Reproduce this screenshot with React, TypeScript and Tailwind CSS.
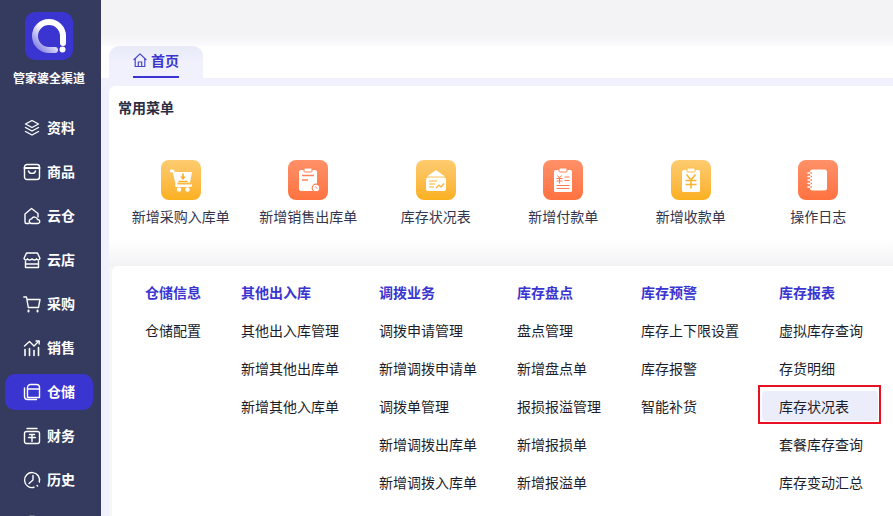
import type { ReactNode } from "react";

const FONT = "font-['Noto_Sans_CJK_SC','Noto_Sans',sans-serif]";

// --- sidebar icons ---
const navIcons: Record<string, ReactNode> = {
  layers: (
    <>
      <path d="M9 1.500 15.500 5 9 8.500 2.500 5Z" />
      <path d="M2.500 8.500 9 12l6.500-3.500" />
      <path d="M2.500 12.500 9 16l6.500-3.500" />
    </>
  ),
  goods: (
    <>
      <rect x="1.500" y="1.500" width="15" height="15" rx="2.500" />
      <path d="M1.500 5h15" strokeWidth="2" />
      <path d="M5.500 8c.8 3.200 6.200 3.200 7 0" />
    </>
  ),
  cloud: (
    <>
      <path d="M6 16.500H3.500A1.500 1.500 0 0 1 2 15V7l6.500-5.500L15 6.500V10" />
      <path d="M8.500 16.500a2.300 2.300 0 0 1 .1-4.600 3.200 3.200 0 0 1 6 .6 2 2 0 0 1 .2 4Z" />
    </>
  ),
  store: (
    <>
      <path d="M3.500 2h11L17 7.500c-.6 1.800-3 1.800-3.500.3-.7 1.500-3.800 1.500-4.500 0-.7 1.500-3.800 1.500-4.500 0C4 9.300 1.600 9.300 1 7.500Z" />
      <path d="M2.500 10v6.500h13V10" />
      <path d="M2.500 13h13" />
    </>
  ),
  cart: (
    <>
      <path d="M.8 2h2.700l1.800 10.500h10.200L17 4.500H4" />
      <path d="M5.500 15.500v1M14.500 15.500v1" strokeWidth="2" />
    </>
  ),
  chart: (
    <>
      <path d="M2 16.500v-6M6.500 16.500V9.500M11 16.500v-5M15.500 16.500V8.500" strokeWidth="1.600" />
      <path d="M1.500 7 6.500 2.500 11 7l4.500-4.500" />
      <path d="M13 2h3.200v3" />
    </>
  ),
  stock: (
    <>
      <path d="M1.500 5v8.500a3 3 0 0 0 3 3h9" />
      <path d="M4.500 14.500V4.500a3 3 0 0 1 3-3h6a3 3 0 0 1 3 3v10Z" />
      <path d="M4.500 6h12" />
    </>
  ),
  finance: (
    <>
      <path d="M4 1.500h10" />
      <rect x="1.500" y="4.500" width="15" height="12" rx="2" />
      <path d="M6.500 7.500h5M5.500 10.500h7M9 7.500v7" />
    </>
  ),
  history: (
    <>
      <path d="M16.300 11A7.500 7.500 0 1 0 11 16.300" />
      <path d="M10 4.500V9l-4 3.500" />
      <path d="M14 14.500l.6.600" />
    </>
  ),
  more: <rect x="5" y="1.500" width="8" height="15" rx="2" />,
};

function NavIcon({ name }: { name: string }) {
  return (
    <svg
      viewBox="0 0 18 18"
      className="h-[18px] w-[18px] shrink-0"
      fill="none"
      stroke="white"
      strokeWidth="1.400"
      strokeLinecap="round"
      strokeLinejoin="round"
    >
      {navIcons[name]}
    </svg>
  );
}

const navItems = [
  { label: "资料", icon: "layers" },
  { label: "商品", icon: "goods" },
  { label: "云仓", icon: "cloud" },
  { label: "云店", icon: "store" },
  { label: "采购", icon: "cart" },
  { label: "销售", icon: "chart" },
  { label: "仓储", icon: "stock", active: true },
  { label: "财务", icon: "finance" },
  { label: "历史", icon: "history" },
];

// --- quick menu icons, viewBox 40x40 ---
const quickIcons: Record<string, ReactNode> = {
  cart: (
    <>
      <path d="M9 11h3.500l3.500 15h13" fill="none" stroke="white" strokeWidth="2" strokeLinejoin="round" />
      <path d="M13.500 12H31l-2 10.500H15.500Z" fill="white" />
      <rect x="9" y="9.500" width="4" height="3" rx="1" fill="white" />
      <rect x="14" y="24.500" width="17" height="2" fill="white" />
      <circle cx="18" cy="29.500" r="2.200" fill="white" />
      <circle cx="26.500" cy="29.500" r="2.200" fill="white" />
      <path d="M21.200 13.500h1.600v3h2L22 20l-2.800-3.500h2Z" fill="#f8ad29" />
      <rect x="17.500" y="20.800" width="9" height="1.200" fill="#f8ad29" />
    </>
  ),
  sale: (
    <>
      <rect x="11" y="10" width="18" height="21" rx="2" fill="white" />
      <rect x="16" y="8" width="8" height="4" rx="1" fill="white" stroke="#ff8259" />
      <path d="M14 15.500h12M14 20h6" stroke="#ff8259" strokeWidth="1.300" />
      <circle cx="28" cy="28" r="3.800" fill="white" stroke="#ff7a4f" strokeWidth="1.200" />
      <path d="M27.500 26.500 29 28.500" stroke="#ff7a4f" />
    </>
  ),
  stock: (
    <>
      <path d="M11 16.500 20 10l9 6.500Z" fill="white" />
      <rect x="10" y="17.500" width="20" height="13.500" rx="2" fill="white" />
      <path d="M13 21h8M13 24h6M13 27h5" stroke="#fbb533" strokeWidth="1.100" />
      <path d="M20 28l3-3 2 2 3-3.500" stroke="#fbb533" strokeWidth="1.200" fill="none" />
    </>
  ),
  pay: (
    <>
      <rect x="11" y="10" width="18" height="22" rx="1.500" fill="white" />
      <rect x="16" y="8" width="8" height="4" rx="1" fill="white" stroke="#ff8259" />
      <path d="M14.500 15.500 16.500 18l2-2.500M13.500 18.500h6M13.500 21h6M16.500 18v5.500" stroke="#ff7a4f" strokeWidth="1" fill="none" />
      <path d="M21.500 17h5M21.500 20.500h5M13.500 25.500h13M13.500 28.500h13" stroke="#ff7a4f" strokeWidth="1" />
    </>
  ),
  receive: (
    <>
      <rect x="11" y="10" width="18" height="22" rx="1.500" fill="white" />
      <rect x="16" y="8" width="8" height="4" rx="1" fill="white" stroke="#fbbc4a" />
      <path d="M15.500 14.500 20 20l4.500-5.500M14.500 20.500h11M14.500 24.500h11M20 20v8.500" stroke="#fbb533" strokeWidth="1.600" fill="none" />
    </>
  ),
  log: (
    <>
      <rect x="12" y="9.500" width="17" height="21" rx="2.500" fill="white" />
      <path d="M11 13h3M11 16.500h3M11 20h3M11 23.500h3M11 27h3" stroke="#ff7f55" strokeWidth="1.400" />
      <path d="M10 13h2M10 16.500h2M10 20h2M10 23.500h2M10 27h2" stroke="white" strokeWidth="1.400" strokeLinecap="round" />
    </>
  ),
};

const quickMenu = [
  { label: "新增采购入库单", icon: "cart", orange: false },
  { label: "新增销售出库单", icon: "sale", orange: true },
  { label: "库存状况表", icon: "stock", orange: false },
  { label: "新增付款单", icon: "pay", orange: true },
  { label: "新增收款单", icon: "receive", orange: false },
  { label: "操作日志", icon: "log", orange: true },
];

const columns = [
  { title: "仓储信息", width: "w-[96px]", items: ["仓储配置"] },
  { title: "其他出入库", width: "w-[138px]", items: ["其他出入库管理", "新增其他出库单", "新增其他入库单"] },
  { title: "调拨业务", width: "w-[138px]", items: ["调拨申请管理", "新增调拨申请单", "调拨单管理", "新增调拨出库单", "新增调拨入库单"] },
  { title: "库存盘点", width: "w-[124px]", items: ["盘点管理", "新增盘点单", "报损报溢管理", "新增报损单", "新增报溢单"] },
  { title: "库存预警", width: "w-[138px]", items: ["库存上下限设置", "库存报警", "智能补货"] },
  { title: "库存报表", width: "w-[114px]", items: ["虚拟库存查询", "存货明细", "库存状况表", "套餐库存查询", "库存变动汇总"] },
];

export default function App() {
  return (
    <div className={`${FONT} flex h-[516px] w-[893px] overflow-hidden bg-[#f0f1fd] text-sm text-[#2b2d42]`}>
      {/* SIDEBAR */}
      <aside className="flex w-[101px] shrink-0 flex-col overflow-hidden bg-[#353b5f] pt-3">
        <div className="flex flex-col items-center pr-[3px]">
          <div className="h-12 w-12 shrink-0 rounded-[10px] bg-[#3a35d0]">
            <svg viewBox="0 0 48 48" className="h-12 w-12">
              <defs>
                <linearGradient id="logo" x1="0" y1="1" x2="1" y2="0">
                  <stop offset="0.1" stopColor="#8f8ce6" />
                  <stop offset="0.55" stopColor="#ffffff" />
                </linearGradient>
              </defs>
              <path d="M30 38H24A14 14 0 1 1 38 24v7" fill="none" stroke="url(#logo)" strokeWidth="6" strokeLinecap="round" />
              <circle cx="37.500" cy="37.500" r="3" fill="white" />
            </svg>
          </div>
          <div className="mt-[9px] text-xs font-bold leading-[18px] whitespace-nowrap text-white">管家婆全渠道</div>
        </div>
        <nav className="mt-[23px] flex w-full flex-col items-start gap-2 px-[5px]">
          {navItems.map((item) => (
            <div
              key={item.label}
              className={`flex h-9 w-[88px] shrink-0 items-center gap-[6px] rounded-[10px] pl-[18px] font-bold text-white ${item.active ? "bg-[#3a35d0]" : ""}`}
            >
              <NavIcon name={item.icon} />
              <span className="pb-[2px]">{item.label}</span>
            </div>
          ))}
          <div className="flex h-9 w-[88px] shrink-0 items-center pl-[18px]">
            <NavIcon name="more" />
          </div>
        </nav>
      </aside>

      {/* MAIN */}
      <main className="flex min-w-0 flex-1 flex-col">
        <div className="h-[46px] shrink-0 bg-gradient-to-b from-[#f3f3f6] from-75% to-[#fbfbfc]" />

        {/* TAB BAR */}
        <div className="flex h-8 shrink-0 bg-white pl-2">
          <div className="flex h-8 w-[94px] justify-center rounded-t-[10px] bg-gradient-to-b from-[#e9eaf8] to-[#f0f1fd] to-50%">
            <div className="flex h-8 w-[46px] items-center gap-1 border-b-2 border-[#3a35d0] pb-[2px] font-bold text-[#3a35d0]">
              <svg viewBox="0 0 14 14" className="h-[14px] w-[14px] shrink-0" fill="none" stroke="#4a46c8" strokeWidth="1.200">
                <path d="M.6 7 7 .9 13.400 7" strokeLinejoin="round" />
                <path d="M2.200 5.500v8h9.600v-8" />
                <path d="M5.300 13.500V9h3.400v4.500" />
              </svg>
              <span className="whitespace-nowrap">首页</span>
            </div>
          </div>
        </div>

        <div className="flex min-h-0 flex-1 flex-col pl-2 pt-2">
          {/* COMMON MENU */}
          <section className="h-[180px] shrink-0 rounded-tl-md bg-gradient-to-b from-white from-85% to-[#f3f3f6] pl-2 pt-3">
            <h2 className="pl-[1px] text-sm font-bold leading-[18px]">常用菜单</h2>
            <div className="mt-[44px] grid w-[765px] grid-cols-6">
              {quickMenu.map((item) => (
                <div key={item.label} className="flex flex-col items-center">
                  <div
                    className={`h-10 w-10 rounded-lg bg-gradient-to-b ${item.orange ? "from-[#ff9068] to-[#ff7240]" : "from-[#fdcb6e] to-[#fbb01c]"}`}
                  >
                    <svg viewBox="0 0 40 40" className="h-10 w-10">
                      {quickIcons[item.icon]}
                    </svg>
                  </div>
                  <div className="mt-[6px] leading-5 whitespace-nowrap text-[#33354d]">{item.label}</div>
                </div>
              ))}
            </div>
          </section>

          {/* MENU COLUMNS */}
          <div className="flex min-h-0 flex-1 bg-[#f6f6f9] pl-[3px]">
            <section className="flex min-h-0 flex-1 rounded-tl-md bg-white pl-[33px] pt-4 text-[#1c1d2b]">
              {columns.map((col) => (
                <div key={col.title} className={`${col.width} shrink-0`}>
                  <div className="h-5 leading-5 font-bold text-[#3a35d0]">{col.title}</div>
                  <div className="mt-[9px] flex flex-col">
                    {col.items.map((text) =>
                      text === "库存状况表" && col.title === "库存报表" ? (
                        <div key={text} className="relative -ml-[17px] flex h-[38px] items-center">
                          <div className="flex h-[30px] w-[116px] items-center rounded bg-[#ecedfb] pl-[17px]">{text}</div>
                          <div className="absolute -left-1 -top-[2px] h-[39px] w-[123px] border-2 border-[#e81123]" />
                        </div>
                      ) : (
                        <div key={text} className="flex h-[38px] items-center whitespace-nowrap">
                          {text}
                        </div>
                      ),
                    )}
                  </div>
                </div>
              ))}
            </section>
          </div>
        </div>
      </main>
    </div>
  );
}
